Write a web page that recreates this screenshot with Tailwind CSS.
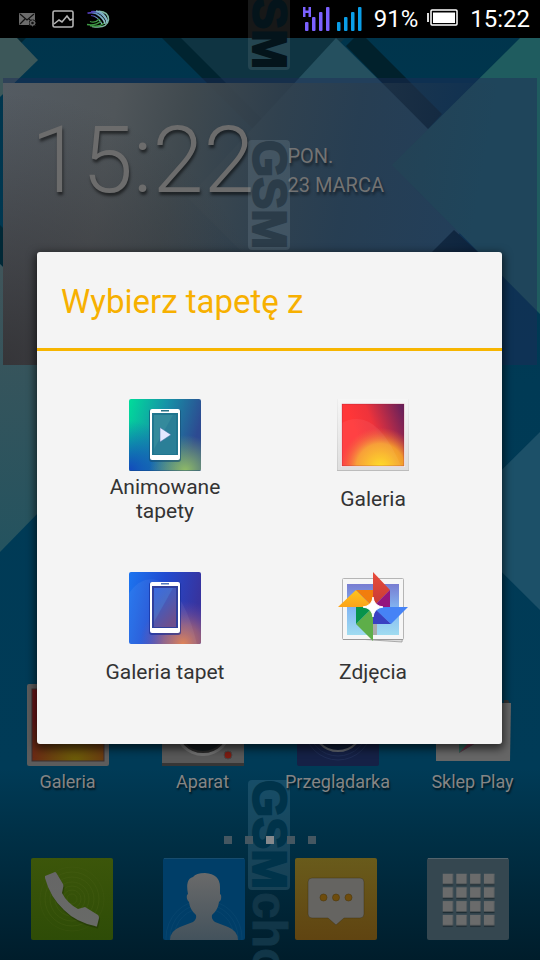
<!DOCTYPE html>
<html lang="pl">
<head>
<meta charset="utf-8">
<meta name="viewport" content="width=device-width, initial-scale=1">
<title>Wybierz tapetę z</title>
<script src="https://cdn.jsdelivr.net/npm/@tailwindcss/browser@4"></script>
</head>
<body class="bg-[#002c40] font-[Roboto,'Noto_Sans',sans-serif]">
<div class="relative flex min-h-screen flex-col overflow-hidden">

  <!-- Wallpaper -->
  <svg class="absolute inset-0 h-full w-full" viewBox="0 0 540 960" preserveAspectRatio="none" aria-hidden="true">
    <defs>
      <linearGradient id="wall" x1="0" y1="0" x2="0" y2="1">
        <stop offset="0" stop-color="#00344b"/><stop offset=".4" stop-color="#003a55"/><stop offset=".8" stop-color="#003b57"/><stop offset=".87" stop-color="#003046"/><stop offset="1" stop-color="#001d2b"/>
      </linearGradient>
      <linearGradient id="leftTile" x1="0" y1="0" x2="0" y2="1"><stop offset="0" stop-color="#40555a"/><stop offset="1" stop-color="#24535f"/></linearGradient>
    </defs>
    <rect width="540" height="960" fill="url(#wall)"/>
    <path d="M180 38H345L188 198L258 268H410L330 188Z" fill="#0f3442"/>
    <path d="M162 38H181L300 157L291 167Z" fill="#012430"/>
    <path d="M17 38H26L19 45Z" fill="#012430"/>
    <path d="M0 38H17L38 60L0 97Z" fill="#3c5759"/>
    <path d="M336 38L188 198L258 268H425L478 215L428 128Z" fill="#25505f"/>
    <path d="M346 46L354 38H366L442 114L428 129Z" fill="#01212c"/>
    <path d="M454 230L430 254H480Z" fill="#01212c"/>
    <path d="M520 38H540V314L392 165Z" fill="#1f5c5f"/>
    <path d="M0 225L40 265V300L0 264Z" fill="#012836"/>
    <path d="M0 264L80 344V470L0 552Z" fill="url(#leftTile)"/>
    <path d="M540 432L450 521L540 610Z" fill="#1c5068"/>
  </svg>

  <header class="relative z-10 flex h-[38px] items-center justify-between bg-black pr-2.5 pl-[19px] text-white">
    <div class="flex items-center gap-4">
      <svg class="h-4 w-[18px]" viewBox="0 0 18 16" aria-hidden="true">
        <rect y="2" width="16" height="12" rx="1" fill="#6b6b6b"/>
        <path d="M1 3l7 6 7-6M1 13l5-5M15 13l-5-5" fill="none" stroke="#111" stroke-width="1.2"/>
        <circle cx="13.500" cy="12" r="3.500" fill="#000"/><circle cx="13.500" cy="12" r="2" fill="none" stroke="#666" stroke-width="1.500"/><path d="M13.500 8.500v7M10 12h7M11 9.500l5 5M16 9.500l-5 5" stroke="#666" stroke-width=".8"/><circle cx="13.500" cy="12" r="1.200" fill="#111"/>
      </svg>
      <svg class="-ml-px h-[18px] w-[22px]" viewBox="0 0 22 18" fill="none" stroke="#b4b4b4" aria-hidden="true">
        <rect x="1" y="1" width="20" height="16" rx="1.500" stroke-width="1.600"/><path d="M2 14l5-4 3 2 5-6 3 4 3-1" stroke-width="1.600"/>
      </svg>
      <svg class="-ml-1 h-[18px] w-6" viewBox="0 0 24 18" fill="none" aria-hidden="true">
        <defs><linearGradient id="sw"><stop offset="0" stop-color="#4c2bb0"/><stop offset=".45" stop-color="#5f8ec0"/><stop offset="1" stop-color="#8fc4c8"/></linearGradient></defs>
        <path d="M6 16.500Q21 19 22.500 10Q23 2 13 1.200" stroke="#7fb9a0" stroke-width="1.500"/>
        <path d="M1.500 3.200Q9 1.500 14 6T19 14" stroke="url(#sw)" stroke-width="1.700"/>
        <path d="M5 1.800Q13 1 17.500 6T20.500 13" stroke="url(#sw)" stroke-width="1.700"/>
        <path d="M10 1Q18 1.500 21.500 11" stroke="#83b6c7" stroke-width="1.700"/>
        <path d="M5 5.500Q12 6 16.500 15" stroke="url(#sw)" stroke-width="1.200"/>
        <path d="M1 14.500Q10 16 15 11M4 11.500Q9 13.500 13.500 9M4 15.800Q14 17.500 18 13" stroke="#3f9a45" stroke-width="1.300"/>
      </svg>
    </div>
    <div class="flex items-center">
      <svg class="mr-[11px] h-6 w-[60px]" viewBox="0 0 60 24" aria-hidden="true">
        <g fill="#7b61ff"><path d="M0 0h2.500v3.500h3V0H8v10H5.500V6h-3v4H0z"/><rect x="2" y="15" width="3.500" height="9" rx="1"/><rect x="9" y="10" width="3.500" height="14" rx="1"/><rect x="16" y="5" width="3.500" height="19" rx="1"/><rect x="23" y="0" width="3.500" height="24" rx="1"/></g>
        <g fill="#0a9ee8"><rect x="34" y="15" width="3.500" height="9" rx="1"/><rect x="41" y="10" width="3.500" height="14" rx="1"/><rect x="48" y="5" width="3.500" height="19" rx="1"/><rect x="55" y="0" width="3.500" height="24" rx="1"/></g>
      </svg>
      <span class="text-2xl leading-[38px]">91%</span>
      <svg class="mr-3 mb-1 ml-[9px] h-[17px] w-[31px]" viewBox="0 0 31 17" aria-hidden="true">
        <rect x="4" y="1" width="26" height="15" rx="1" fill="none" stroke="#fff" stroke-width="1.500"/><rect x="6" y="3.500" width="22" height="10.500" fill="#fff"/><rect x="0" y="4" width="2" height="9" fill="#ddd"/>
      </svg>
      <time class="text-2xl leading-[38px]">15:22</time>
    </div>
  </header>

  <!-- Clock widget -->
  <section class="relative mx-[3px] mt-10 h-[287px] bg-[#1f2b57]/45 pt-[5px]">
    <div class="flex h-full items-start bg-[radial-gradient(circle_at_0%_100%,#2e2c2fcc_0%,#2e2c2f00_45%),linear-gradient(100deg,#545b62_0%,#50565a_20%,#434b4ff2_32%,#34424ccc_48%,#2b3d4b88_62%,#27394a00_85%)] pt-[23px] pl-7">
      <time class="text-[92px] leading-[110px] font-light text-[#6c6c6c] [text-shadow:1px_3px_3px_#0008]">15:22</time>
      <p class="pt-9 pl-[33px] text-[20px] leading-[29px] text-[#737373] [text-shadow:1px_3px_3px_#0008]">PON.<br>23 MARCA</p>
    </div>
  </section>

  <main class="relative z-10 flex flex-1 flex-col justify-end">
    <nav class="grid grid-cols-4 text-center text-lg leading-6 text-[#858585] [text-shadow:1px_2px_2px_#000a]" aria-label="Aplikacje">
      <a href="#galeria" class="flex flex-col items-center gap-1">
        <svg class="h-[82px] w-[82px]" viewBox="0 0 82 82" aria-hidden="true">
          <defs><radialGradient id="gd" cx=".6" cy="1" r=".8"><stop offset="0" stop-color="#6b5d08"/><stop offset=".4" stop-color="#69420f"/><stop offset="1" stop-color="#6c1719"/></radialGradient></defs>
          <rect width="82" height="82" rx="2" fill="#5c5c5c"/><rect x="5" y="5" width="72" height="72" fill="url(#gd)" stroke="#3c3030"/>
        </svg>
        Galeria</a>
      <a href="#aparat" class="flex flex-col items-center gap-1">
        <svg class="h-[82px] w-[82px]" viewBox="0 0 82 82" aria-hidden="true">
          <rect width="82" height="82" rx="2" fill="#585858"/><rect y="79" width="82" height="3" fill="#363636"/><circle cx="41" cy="43" r="29" fill="#707070"/><circle cx="41" cy="43" r="25" fill="#141a1d" stroke="#292929" stroke-width="2"/><circle cx="66" cy="71" r="4" fill="#7c1d13" stroke="#474747"/>
        </svg>
        Aparat</a>
      <a href="#przegladarka" class="flex flex-col items-center gap-1">
        <svg class="h-[82px] w-[82px]" viewBox="0 0 82 82" aria-hidden="true">
          <rect width="82" height="82" rx="2" fill="#152146"/><g fill="none" stroke="#1f2d54"><circle cx="41" cy="42" r="30"/><circle cx="41" cy="42" r="34"/></g><circle cx="41" cy="42" r="25" fill="#111c34" stroke="#60656d" stroke-width="2"/>
        </svg>
        Przeglądarka</a>
      <a href="#sklep" class="flex flex-col items-center gap-1">
        <svg class="h-[82px] w-[82px]" viewBox="0 0 82 82" aria-hidden="true">
          <path d="M18 18Q18 1 40 1T66 18" fill="none" stroke="#484848" stroke-width="3"/><path d="M72 16h4l2 4h-6z" fill="#333"/><path d="M4 19H79L78 77H4Z" fill="#666"/><path d="M27 38V69L54 53Z" fill="#2e5f56"/><path d="M27 69L54 53L46 49Z" fill="#672f44"/>
        </svg>
        Sklep Play</a>
    </nav>

    <div class="mt-[42px] flex justify-center gap-[13px]" aria-hidden="true">
      <i class="size-2 bg-[#455761]"></i><i class="size-2 bg-[#455761]"></i><i class="size-2 bg-[#85898c]"></i><i class="size-2 bg-[#455761]"></i><i class="size-2 bg-[#455761]"></i>
    </div>

    <nav class="mt-3.5 flex justify-between px-[31px] pb-5" aria-label="Szybki dostęp">
      <a href="#telefon" aria-label="Telefon">
        <svg class="size-[82px]" viewBox="0 0 82 82" aria-hidden="true">
          <defs><linearGradient id="ph" x1="0" y1="0" x2="0" y2="1"><stop offset="0" stop-color="#3c560a"/><stop offset="1" stop-color="#2e4c07"/></linearGradient>
          <linearGradient id="gr" x1="0" y1="0" x2="0" y2="1"><stop offset="0" stop-color="#666"/><stop offset="1" stop-color="#686a67"/></linearGradient></defs>
          <rect width="82" height="82" rx="2" fill="url(#ph)"/>
          <g fill="none" stroke="#4b6118" stroke-opacity=".35"><circle cx="41" cy="41" r="5"/><circle cx="41" cy="41" r="9"/><circle cx="41" cy="41" r="13"/><circle cx="41" cy="41" r="17"/><circle cx="41" cy="41" r="22"/><circle cx="41" cy="41" r="27"/><circle cx="41" cy="41" r="32" stroke-opacity=".2"/></g>
          <path d="M14 18L24 14Q25 14 26 16L32 26Q33 28 32 30L31 35Q36 45 47 51L54 49L67 57Q68 58 68 60L66 68Q66 69 64 68Q45 64 33 52Q19 39 14 20Z" fill="#1d3005" opacity=".5" transform="translate(1 2)"/>
          <path d="M14 18L24 14Q25 14 26 16L32 26Q33 28 32 30L31 35Q36 45 47 51L54 49L67 57Q68 58 68 60L66 68Q66 69 64 68Q45 64 33 52Q19 39 14 20Z" fill="url(#gr)"/>
        </svg></a>
      <a href="#kontakty" aria-label="Kontakty">
        <svg class="size-[82px]" viewBox="0 0 82 82" aria-hidden="true">
          <defs><linearGradient id="pe" x1="0" y1="0" x2="0" y2="1"><stop offset="0" stop-color="#6a6a6a"/><stop offset="1" stop-color="#43525c"/></linearGradient></defs>
          <rect width="82" height="82" rx="2" fill="#003e68"/><path d="M1 .5H81" stroke="#174c6e"/>
          <g fill="none" stroke="#114e76" stroke-opacity=".4"><circle cx="41" cy="80" r="38"/><circle cx="41" cy="80" r="34"/><circle cx="41" cy="80" r="30"/></g>
          <path d="M7 82Q7 73 17 69L30 64Q34 61 33 57Q27 52 26 44Q23 41 24 37L25 36Q22 21 30 19Q33 15 42 15Q57 16 57 29V36L58 37Q59 42 56 44Q55 52 49 57Q48 61 52 64L65 69Q75 73 75 82Z" fill="url(#pe)"/>
        </svg></a>
      <a href="#wiadomosci" aria-label="Wiadomości">
        <svg class="size-[82px]" viewBox="0 0 82 82" aria-hidden="true">
          <defs><linearGradient id="ms" x1="0" y1="0" x2="0" y2="1"><stop offset="0" stop-color="#695b1b"/><stop offset="1" stop-color="#604411"/></linearGradient></defs>
          <rect width="82" height="82" rx="2" fill="url(#ms)"/>
          <path d="M17 20H65Q69 20 69 24V56Q69 60 65 60H49L41 67L33 60H17Q13 60 13 56V24Q13 20 17 20Z" fill="#656461" stroke="#3c300d" stroke-opacity=".4"/>
          <g fill="#6e4c0c" stroke="#4d380e" stroke-opacity=".6"><circle cx="28.500" cy="39.500" r="3.500"/><circle cx="41" cy="39.500" r="3.500"/><circle cx="53.500" cy="39.500" r="3.500"/></g>
        </svg></a>
      <a href="#aplikacje" aria-label="Wszystkie aplikacje">
        <svg class="size-[82px]" viewBox="0 0 82 82" aria-hidden="true">
          <defs><pattern id="cells" width="13.800" height="13.800" x="15.500" y="15.500" patternUnits="userSpaceOnUse"><rect y="1.500" width="10.500" height="10.500" fill="#1d2b32"/><rect width="10.500" height="10.500" fill="#6a6b6b"/></pattern></defs>
          <rect width="82" height="82" rx="2" fill="#354750"/><path d="M1 .5H81" stroke="#53636c"/><rect x="15.500" y="15.500" width="53" height="54" fill="url(#cells)"/>
        </svg></a>
    </nav>
  </main>

  <!-- Watermark -->
  <div class="pointer-events-none absolute top-0 bottom-0 left-[248px] z-10 w-[42px] overflow-hidden font-['Liberation_Sans',Arial,sans-serif] text-[48px] leading-[42px] font-bold" aria-hidden="true">
    <span class="absolute -top-10 left-0 flex h-[110px] w-[42px] items-center justify-center rounded bg-[#b0b8bb]/13 text-[#04141b] [-webkit-text-stroke:2px_#04141b] [writing-mode:vertical-rl]">GSM</span>
    <span class="absolute top-[140px] left-0 flex h-[110px] w-[42px] items-center justify-center rounded bg-[#8fa4ad]/20 text-[#2b3c49] [-webkit-text-stroke:2px_#2b3c49] [writing-mode:vertical-rl]">GSM</span>
  </div>
  <div class="pointer-events-none absolute top-[780px] bottom-0 left-[248px] w-[42px] overflow-hidden font-['Liberation_Sans',Arial,sans-serif] text-[48px] leading-[42px] font-bold" aria-hidden="true">
    <span class="absolute top-0 left-0 flex h-[110px] w-[42px] items-center justify-center rounded bg-[#5c8ca5]/25 text-[#00334a] [-webkit-text-stroke:2px_#00334a] [writing-mode:vertical-rl]">GSM</span>
    <span class="absolute top-28 left-0 w-[42px] text-[#113648] [-webkit-text-stroke:1px_#113648] [writing-mode:vertical-rl]">cho</span>
  </div>

  <!-- Wallpaper source dialog -->
  <div class="absolute inset-x-0 top-[38px] bottom-0 z-20 flex items-center pr-[38px] pb-0.5 pl-[37px]">
    <div role="dialog" aria-labelledby="dialog-title" class="w-full rounded-[3px] bg-[#f4f4f4] shadow-[0_3px_8px_2px_#0009]">
      <h1 id="dialog-title" class="flex h-[99px] items-center border-b-3 border-[#f7b500] px-6 pt-[3px] text-[33px] text-[#f7b000]">Wybierz tapetę z</h1>
      <div class="grid grid-cols-2 gap-y-[49px] py-12 pr-[25px] pl-6 text-[21px] leading-6 text-[#333]">
        <button class="flex flex-col items-center gap-1">
          <svg class="size-[72px]" viewBox="0 0 72 72" aria-hidden="true">
            <defs>
              <linearGradient id="a1" x1="0" y1="0" x2="1" y2=".3"><stop offset="0" stop-color="#00dd9a"/><stop offset=".5" stop-color="#1691a7"/><stop offset="1" stop-color="#2d4a91"/></linearGradient>
              <radialGradient id="a2" cx=".78" cy="1" r=".5"><stop offset="0" stop-color="#91bd66"/><stop offset="1" stop-color="#91bd66" stop-opacity="0"/></radialGradient>
              <radialGradient id="a3" cx="0" cy="1" r=".7"><stop offset="0" stop-color="#1348bd"/><stop offset="1" stop-color="#1348bd" stop-opacity="0"/></radialGradient>
            </defs>
            <rect width="72" height="72" rx="2" fill="url(#a1)"/><rect width="72" height="72" rx="2" fill="url(#a3)"/><rect width="72" height="72" rx="2" fill="url(#a2)"/>
            <rect x="20" y="10" width="32" height="53" rx="3" fill="#134c73" opacity=".6"/>
            <rect x="21" y="10" width="30" height="51" rx="2" fill="#fff"/><rect x="23" y="14" width="26" height="42" fill="#21768f"/><rect x="25" y="16" width="22" height="39" fill="#348a9c"/><path d="M47 16V55H25V50L44 16Z" fill="#17688b" opacity=".3"/><rect x="32" y="11" width="8" height="1.500" fill="#287286"/>
            <path d="M31 28.500V43L42 35.700Z" fill="#e4e8ff" stroke="#3e6da4" stroke-opacity=".5"/>
            <path d="M.5 71.500H71.500" stroke="#123f7a" stroke-opacity=".4"/>
          </svg>
          <span class="flex h-12 w-[130px] items-center justify-center">Animowane tapety</span>
        </button>
        <button class="flex flex-col items-center gap-1">
          <svg class="size-[72px]" viewBox="0 0 72 72" aria-hidden="true">
            <defs>
              <linearGradient id="g0" x1="0" y1="0" x2="0" y2="1"><stop offset="0" stop-color="#f6f6f6"/><stop offset="1" stop-color="#dedede"/></linearGradient>
              <linearGradient id="gs" x1="0" y1="0" x2="0" y2="1"><stop offset="0" stop-color="#eee"/><stop offset="1" stop-color="#ccc"/></linearGradient>
              <linearGradient id="g1" x1=".2" y1=".4" x2="1" y2=".1"><stop offset="0" stop-color="#ff3638"/><stop offset=".35" stop-color="#ef333b"/><stop offset="1" stop-color="#66205b"/></linearGradient>
              <radialGradient id="g2" cx=".62" cy="1.030" r=".65"><stop offset="0" stop-color="#ffdf1b"/><stop offset=".6" stop-color="#f7a62b" stop-opacity=".9"/><stop offset="1" stop-color="#ee6038" stop-opacity="0"/></radialGradient>
            </defs>
            <rect width="72" height="72" rx="1" fill="url(#gs)"/><rect x="1" width="70" height="71" fill="url(#g0)"/><path d="M0 71.500H72" stroke="#bcbcbc"/>
            <rect x="4" y="4" width="64" height="64" fill="#fff"/>
            <rect x="5" y="5" width="62" height="62" fill="url(#g1)"/><rect x="5" y="5" width="62" height="62" fill="url(#g2)"/>
            <path d="M5 24Q15 18 27 21Q47 27 64 67H5Z" fill="#fff" opacity=".06"/>
            <rect x="5" y="5" width="62" height="62" fill="none" stroke="#8e1b31" stroke-opacity=".35"/>
          </svg>
          <span class="flex h-12 items-center">Galeria</span>
        </button>
        <button class="flex flex-col items-center gap-1">
          <svg class="size-[72px]" viewBox="0 0 72 72" aria-hidden="true">
            <defs>
              <linearGradient id="b1" x1="0" y1="0" x2="1" y2=".2"><stop offset="0" stop-color="#1c75f0"/><stop offset=".5" stop-color="#214bd0"/><stop offset="1" stop-color="#37349f"/></linearGradient>
              <radialGradient id="b2" cx=".75" cy="1" r=".6"><stop offset="0" stop-color="#de7d4d"/><stop offset=".45" stop-color="#a26377" stop-opacity=".8"/><stop offset="1" stop-color="#7448a0" stop-opacity="0"/></radialGradient>
              <linearGradient id="b3" x1="0" y1="0" x2=".6" y2="1"><stop offset="0" stop-color="#3a6be0"/><stop offset=".5" stop-color="#4a6cc4"/><stop offset="1" stop-color="#7f5c88"/></linearGradient>
            </defs>
            <rect width="72" height="72" rx="2" fill="url(#b1)"/><rect width="72" height="72" rx="2" fill="url(#b2)"/>
            <path d="M0 21Q15 0 35 11Q56 23 68 72H0Z" fill="#fff" opacity=".06"/>
            <rect x="20" y="10" width="32" height="53" rx="3" fill="#102891" opacity=".6"/>
            <rect x="21" y="10" width="30" height="51" rx="2" fill="#fff"/><rect x="23" y="14" width="26" height="42" fill="#2f3f9c"/><rect x="25" y="16" width="22" height="39" fill="url(#b3)"/><path d="M47 16V55H25V50L44 16Z" fill="#47329a" opacity=".3"/><rect x="32" y="11" width="8" height="1.500" fill="#5478ba"/>
          </svg>
          <span class="flex h-12 items-center">Galeria tapet</span>
        </button>
        <button class="flex flex-col items-center gap-1">
          <svg class="size-[72px]" viewBox="0 0 72 72" aria-hidden="true">
            <defs>
              <linearGradient id="z1" x1="0" y1="0" x2="0" y2="1"><stop offset="0" stop-color="#777cd1"/><stop offset=".5" stop-color="#83b8f3"/><stop offset="1" stop-color="#a0dcf0"/></linearGradient>
              <linearGradient id="z2" x1="0" y1="0" x2="0" y2="1"><stop offset="0" stop-color="#e84b3b"/><stop offset="1" stop-color="#c53a35"/></linearGradient>
              <linearGradient id="z3" x1="0" y1="0" x2="0" y2="1"><stop offset="0" stop-color="#ffc41b"/><stop offset="1" stop-color="#fba31a"/></linearGradient>
            </defs>
            <path d="M6 66L65 70L66 60H6Z" fill="#ddd" stroke="#999" stroke-width=".8"/>
            <rect x="5.500" y="6.500" width="61" height="61" rx="1" fill="#f6f6f6" stroke="#b5b5b5"/>
            <path d="M6 67.500H66" stroke="#999"/>
            <rect x="10" y="12" width="52" height="51" fill="url(#z1)"/><path d="M36 50H40V63H36Z" fill="#aaa"/>
            <path d="M36 0L53 18L36 35Z" fill="url(#z2)"/><path d="M53 18V35H36Z" fill="#94157d"/>
            <path d="M71 35L54 52L36 35Z" fill="#4683f6"/><path d="M54 52H36V35Z" fill="#3941c2"/>
            <path d="M36 69L19 52L36 35Z" fill="#5eae49"/><path d="M19 52V35H36Z" fill="#07934b"/>
            <path d="M1 35L19 18L36 35Z" fill="url(#z3)"/><path d="M19 18H36V35Z" fill="#f27d0d"/>
            <path d="M36 25Q37 34 46 35Q37 36 36 45Q35 36 26 35Q35 34 36 25Z" fill="#fff" stroke="#fff"/>
          </svg>
          <span class="flex h-12 items-center">Zdjęcia</span>
        </button>
      </div>
    </div>
  </div>
</div>
</body>
</html>
